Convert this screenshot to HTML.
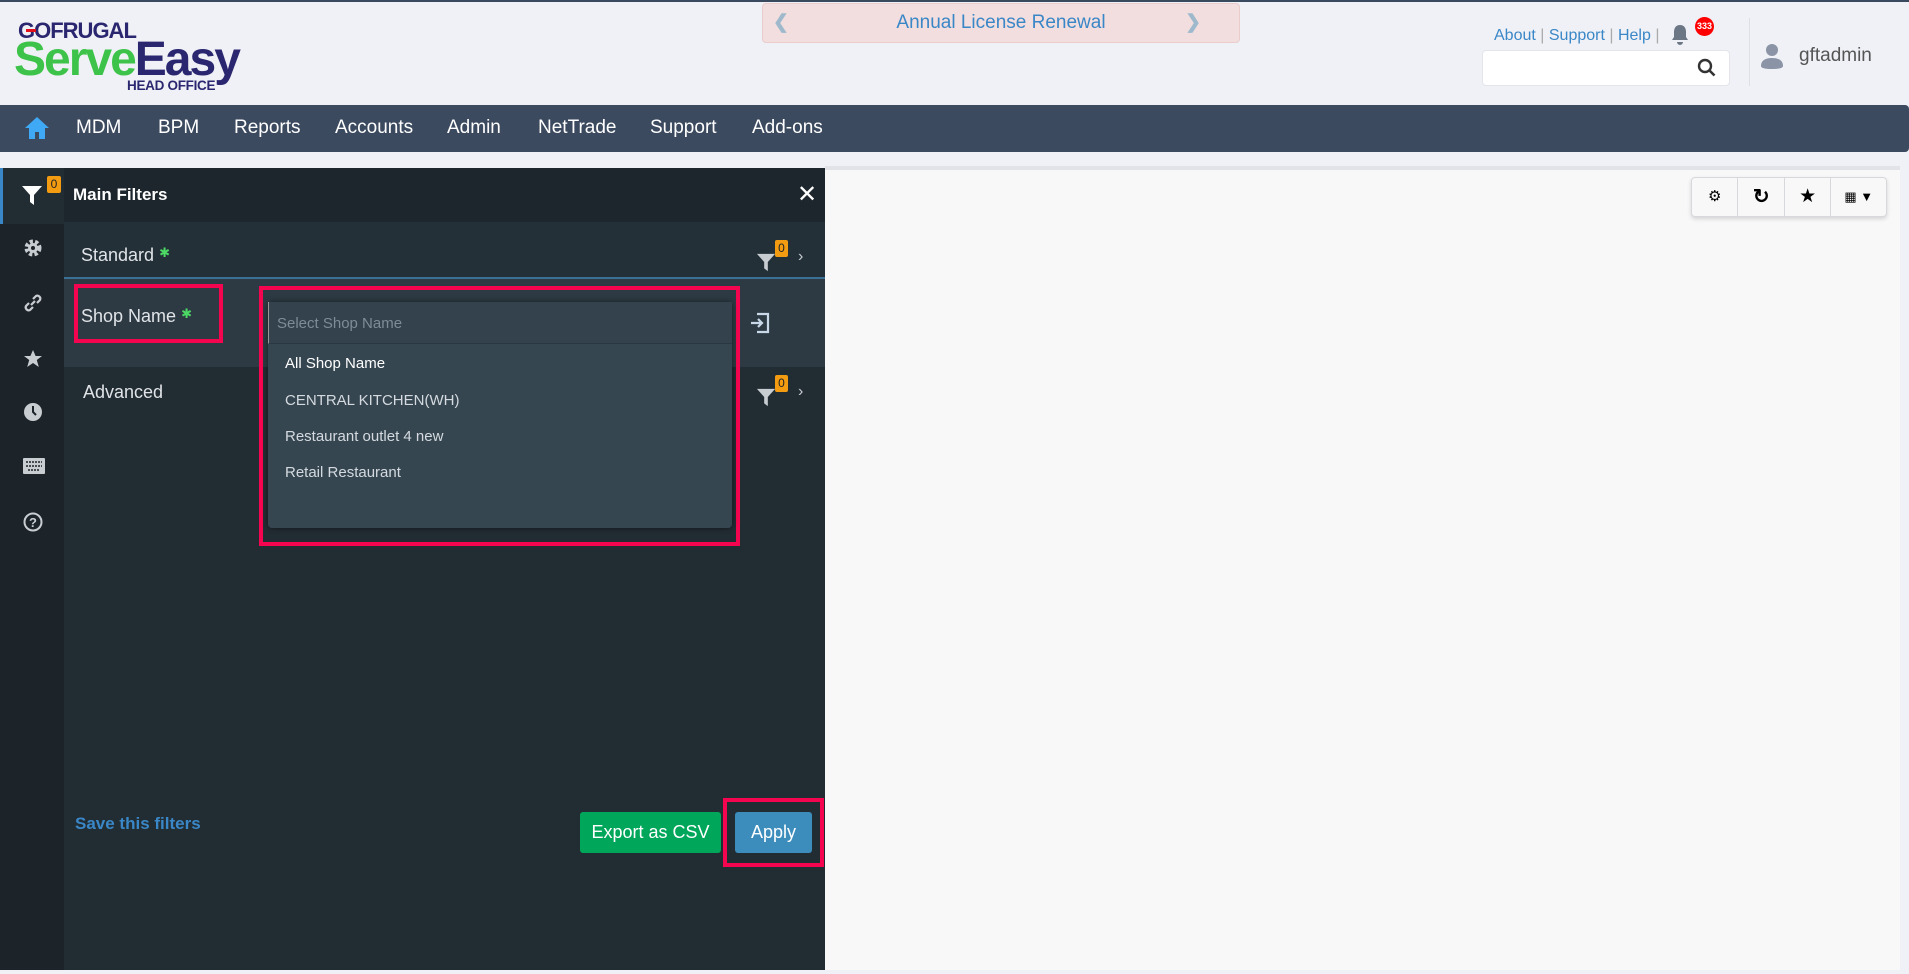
<!DOCTYPE html>
<html><head><meta charset="utf-8"><style>
*{box-sizing:border-box;margin:0;padding:0}
body{width:1909px;height:974px;background:#f0f1f6;font-family:"Liberation Sans",sans-serif;position:relative;overflow:hidden;border-top:2px solid #3a4a5e}
.a{position:absolute}
.nav span{position:absolute;top:12px;color:#fff;font-size:19px}
.rail svg{position:absolute;left:23px}
.item{position:absolute;left:17px;color:#e0e4e8;font-size:18px}
</style></head><body>
<!-- logo -->
<div class="a" style="left:18px;top:16px;font-size:22px;font-weight:bold;color:#2a2770;letter-spacing:-1px">GOFRUGAL</div>
<div class="a" style="left:26px;top:27px;width:10px;height:3px;background:#e3101e"></div>
<div class="a" style="left:14px;top:34px;font-size:48px;font-weight:bold;letter-spacing:-2px;line-height:48px"><span style="color:#3ec34a">Serve</span><span style="color:#2a2770">Easy</span></div>
<div class="a" style="left:127px;top:76px;font-size:13.5px;font-weight:bold;color:#2a2770;letter-spacing:-0.3px">HEAD OFFICE</div>
<!-- annual -->
<div class="a" style="left:762px;top:1px;width:478px;height:40px;background:#f2dede;border:1px solid #ebcccc;border-radius:4px;color:#3a87c7;font-size:19px;text-align:center;line-height:38px">Annual License Renewal
<span class="a" style="left:10px;top:0;color:#9fb9cc;font-weight:bold">&#10094;</span><span class="a" style="right:38px;top:0;color:#9fb9cc;font-weight:bold">&#10095;</span></div>
<!-- right header -->
<div class="a" style="left:1494px;top:25px;font-size:16px;color:#3a87c7">About <span style="color:#aaa">|</span> Support <span style="color:#aaa">|</span> Help <span style="color:#aaa">|</span></div>
<svg class="a" style="left:1671px;top:22px" width="18" height="22" viewBox="0 0 18 22"><path d="M9 1c-4 0-6 3-6 7v5l-2 3h16l-2-3V8c0-4-2-7-6-7zM6 18a3 3 0 006 0z" fill="#6b7785"/></svg>
<div class="a" style="left:1695px;top:15px;width:19px;height:19px;border-radius:50%;background:#f00;color:#fff;font-size:9px;font-weight:bold;text-align:center;line-height:19px">333</div>
<div class="a" style="left:1482px;top:48px;width:248px;height:36px;background:#fff;border:1px solid #e3e5ea;border-radius:4px"></div>
<svg class="a" style="left:1697px;top:56px" width="20" height="20" viewBox="0 0 20 20"><circle cx="8" cy="8" r="6" stroke="#333" stroke-width="2.4" fill="none"/><path d="M12.5 12.5l5 5" stroke="#333" stroke-width="2.6"/></svg>
<div class="a" style="left:1749px;top:16px;width:1px;height:68px;background:#dde0e6"></div>
<svg class="a" style="left:1760px;top:40px" width="24" height="28" viewBox="0 0 24 28"><circle cx="12" cy="8" r="6" fill="#8a94a6"/><path d="M1 24c0-6 5-8 11-8s11 2 11 8c0 2-4 3-11 3S1 26 1 24z" fill="#8a94a6"/></svg>
<div class="a" style="left:1799px;top:43px;font-size:19px;color:#555">gftadmin</div>
<!-- nav -->
<div class="a nav" style="left:0;top:103px;width:1909px;height:47px;background:#3c4a5f;border-radius:0 4px 4px 0">
<svg class="a" style="left:24px;top:11px" width="26" height="24" viewBox="0 0 26 24"><path d="M13 1L1 12h4v11h6v-7h4v7h6V12h4z" fill="#3fa9f5"/></svg>
<span style="left:76px">MDM</span><span style="left:158px">BPM</span><span style="left:234px">Reports</span><span style="left:335px">Accounts</span><span style="left:447px">Admin</span><span style="left:538px">NetTrade</span><span style="left:650px">Support</span><span style="left:752px">Add-ons</span></div>
<!-- main content -->
<div class="a" style="left:825px;top:164px;width:1075px;height:804px;background:#f8f8f9;border-top:4px solid #e1e3e8"></div>
<div class="a" style="left:1691px;top:175px;width:196px;height:40px;background:#f8f8f8;border:1px solid #d6d8dc;border-radius:4px;box-shadow:0 2px 4px rgba(0,0,0,.15);display:flex">
<div style="flex:1;border-right:1px solid #d6d8dc;text-align:center;line-height:38px;font-size:15px">&#9881;</div>
<div style="flex:1;border-right:1px solid #d6d8dc;text-align:center;line-height:38px;font-size:20px;font-weight:bold">&#8635;</div>
<div style="flex:1;border-right:1px solid #d6d8dc;text-align:center;line-height:38px;font-size:19px">&#9733;</div>
<div style="flex:1.2;text-align:center;line-height:38px;font-size:13px">&#9638; &#9660;</div></div>
<!-- filter panel -->
<div class="a" style="left:0;top:166px;width:825px;height:802px;background:#222c33">
 <div class="a rail" style="left:0;top:0;width:64px;height:802px;background:#1c2329">
  <div class="a" style="left:0;top:0;width:64px;height:56px;background:#222c33;border-left:3px solid #3a87c7"></div>
  <svg style="top:16px;left:21px" width="22" height="22" viewBox="0 0 22 22"><path d="M1 2h20l-8 9v10l-4-3v-7z" fill="#fff"/></svg>
  <div class="a" style="left:47px;top:8px;width:14px;height:17px;background:#f39c12;border-radius:2px;font-size:12px;text-align:center;line-height:17px;color:#222">0</div>
  <svg style="top:70px" width="20" height="20" viewBox="0 0 20 20"><circle cx="10" cy="10" r="6" fill="none" stroke="#c8cdd2" stroke-width="5" stroke-dasharray="3 2"/><circle cx="10" cy="10" r="5" fill="#c8cdd2"/><circle cx="10" cy="10" r="2" fill="#1c2329"/></svg>
  <svg style="top:125px" width="20" height="20" viewBox="0 0 20 20"><path d="M8 12l4-4M6 10l-3 3a3 3 0 004 4l3-3M14 10l3-3a3 3 0 00-4-4l-3 3" stroke="#c8cdd2" stroke-width="2.2" fill="none"/></svg>
  <svg style="top:181px" width="20" height="20" viewBox="0 0 20 20"><path d="M10 1l2.6 6h6.4l-5.2 4 2 7-5.8-4-5.8 4 2-7L1 7h6.4z" fill="#c8cdd2"/></svg>
  <svg style="top:234px" width="20" height="20" viewBox="0 0 20 20"><circle cx="10" cy="10" r="9" fill="#c8cdd2"/><path d="M10 4v6l3 3" stroke="#1c2329" stroke-width="2" fill="none"/></svg>
  <svg style="top:290px" width="22" height="16" viewBox="0 0 22 16"><rect width="22" height="16" rx="1" fill="#c8cdd2"/><path d="M3 4h16M3 8h16M5 12h12" stroke="#1c2329" stroke-width="1.5" stroke-dasharray="2 1"/></svg>
  <svg style="top:344px" width="20" height="20" viewBox="0 0 20 20"><circle cx="10" cy="10" r="8.5" fill="none" stroke="#c8cdd2" stroke-width="2"/><text x="10" y="15" font-size="13" font-weight="bold" fill="#c8cdd2" text-anchor="middle" font-family="Liberation Sans">?</text></svg>
 </div>
 <div class="a" style="left:64px;top:0;width:761px;height:54px;background:#1e262d">
  <div class="a" style="left:9px;top:17px;color:#fff;font-size:17px;font-weight:bold">Main Filters</div>
  <div class="a" style="left:733px;top:12px;color:#fff;font-size:24px">&#10005;</div></div>
 <div class="a" style="left:64px;top:54px;width:761px;height:57px;background:#243038;border-bottom:2px solid #3a6f96">
  <div class="item" style="top:23px">Standard <span style="color:#4cd964;font-size:13px;vertical-align:top">&#10033;</span></div></div>
 <div class="a" style="left:64px;top:111px;width:761px;height:88px;background:#2d3a43">
  <div class="item" style="top:27px">Shop Name <span style="color:#4cd964;font-size:13px;vertical-align:top">&#10033;</span></div>
  <svg class="a" style="left:686px;top:33px" width="20" height="22" viewBox="0 0 20 22"><path d="M7 2h11v18H7M1 11h11M8 7l4 4-4 4" stroke="#c8d8e8" stroke-width="2.2" fill="none"/></svg></div>
 <div class="item" style="left:83px;top:214px">Advanced</div>
 <svg class="a" style="left:756px;top:83px" width="20" height="22" viewBox="0 0 22 22"><path d="M1 2h20l-8 9v10l-4-3v-7z" fill="#c8cdd2"/></svg>
 <div class="a" style="left:775px;top:72px;width:13px;height:17px;background:#f39c12;border-radius:2px;font-size:12px;text-align:center;line-height:17px;color:#222">0</div>
 <div class="a" style="left:798px;top:80px;color:#c8cdd2;font-size:16px">&#8250;</div>
 <svg class="a" style="left:756px;top:218px" width="20" height="22" viewBox="0 0 22 22"><path d="M1 2h20l-8 9v10l-4-3v-7z" fill="#c8cdd2"/></svg>
 <div class="a" style="left:775px;top:207px;width:13px;height:17px;background:#f39c12;border-radius:2px;font-size:12px;text-align:center;line-height:17px;color:#222">0</div>
 <div class="a" style="left:798px;top:215px;color:#c8cdd2;font-size:16px">&#8250;</div>
 <!-- red boxes -->
 <div class="a" style="left:74px;top:116px;width:149px;height:59px;border:4px solid #f5054f"></div>
 <div class="a" style="left:259px;top:118px;width:481px;height:260px;border:4px solid #f5054f"></div>
 <div class="a" style="left:268px;top:134px;width:464px;height:226px;background:#364651;border-radius:4px;box-shadow:0 0 6px rgba(0,0,0,.5)">
  <div style="height:42px;border-bottom:1px solid #2a3640;background:#33424d;padding:13px 8px;color:#7f8c96;font-size:15px;border-left:1px solid #999">Select Shop Name</div>
  <div class="a" style="left:17px;top:53px;color:#fff;font-size:15px">All Shop Name</div>
  <div class="a" style="left:17px;top:90px;color:#d4dadf;font-size:15px">CENTRAL KITCHEN(WH)</div>
  <div class="a" style="left:17px;top:126px;color:#d4dadf;font-size:15px">Restaurant outlet 4 new</div>
  <div class="a" style="left:17px;top:162px;color:#d4dadf;font-size:15px">Retail Restaurant</div></div>
 <div class="a" style="left:75px;top:646px;color:#3a87c7;font-size:17px;font-weight:bold">Save this filters</div>
 <div class="a" style="left:580px;top:644px;width:141px;height:41px;background:#00a65a;border-radius:3px;color:#fff;font-size:18px;text-align:center;line-height:41px">Export as CSV</div>
 <div class="a" style="left:723px;top:630px;width:101px;height:69px;border:4px solid #f5054f"></div>
 <div class="a" style="left:735px;top:644px;width:77px;height:41px;background:#3c8dbc;border-radius:3px;color:#fff;font-size:18px;text-align:center;line-height:41px">Apply</div>
</div>
</body></html>
